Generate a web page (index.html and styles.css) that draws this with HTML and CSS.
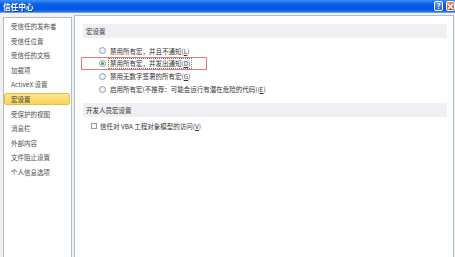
FILE: index.html
```html
<!DOCTYPE html>
<html>
  <head>
    <meta charset="UTF-8" />
    <title>信任中心</title>
    <link rel="stylesheet" href="styles.css">
  </head>
  <body>
    <div class="window">
      <div class="titlebar">
        <span class="title">信任中心</span>
        <span class="tb-btn help">?</span>
        <span class="tb-btn close">
          <svg width="7" height="7" viewBox="0 0 7 7"><path d="M1 1L6 6M6 1L1 6" stroke="#fff" stroke-width="1.6"/></svg>
        </span>
      </div>

      <div class="main">
        <ul class="nav">
          <li>受信任的发布者</li>
          <li>受信任位置</li>
          <li>受信任的文档</li>
          <li>加载项</li>
          <li>ActiveX 设置</li>
          <li class="active">宏设置</li>
          <li>受保护的视图</li>
          <li>消息栏</li>
          <li>外部内容</li>
          <li>文件阻止设置</li>
          <li>个人信息选项</li>
        </ul>

        <div class="content">
          <div class="band">宏设置</div>
          <div class="options">
            <div class="opt"><span class="radio"></span><span>禁用所有宏，并且不通知(<u>L</u>)</span></div>
            <div class="opt marked">
              <span class="radio checked"></span><span class="focus">禁用所有宏，并发出通知(<u>D</u>)</span>
              <span class="mark"></span>
            </div>
            <div class="opt"><span class="radio"></span><span>禁用无数字签署的所有宏(<u>G</u>)</span></div>
            <div class="opt"><span class="radio"></span><span>启用所有宏(不推荐：可能会运行有潜在危险的代码)(<u>E</u>)</span></div>
          </div>

          <div class="band second">开发人员宏设置</div>
          <div class="check-row"><span class="box"></span><span>信任对 VBA 工程对象模型的访问(<u>V</u>)</span></div>
        </div>
      </div>
    </div>
  </body>
</html>
```

FILE: styles.css
```css
* {
  margin: 0;
  padding: 0;
  box-sizing: border-box;
}

body {
  width: 455px;
  height: 257px;
  overflow: hidden;
  background-color: #f3f1e8;
  font-family: "Noto Sans CJK SC", "Noto Sans", sans-serif;
  font-size: 6.5px;
  color: #3c3c3c;
}

.window {
  height: 257px;
  display: flex;
  flex-direction: column;
}

.titlebar {
  height: 13px;
  flex-shrink: 0;
  display: flex;
  align-items: center;
  padding-left: 3px;
  background: linear-gradient(#3d8ef7, #0a5ee6 35%, #0055e4 75%, #2a74ee);
  border-bottom: 1px solid #6f9ee8;
}

.title {
  color: #fff;
  font-weight: bold;
  font-size: 7.6px;
  text-shadow: 1px 1px 0 #0a3aa8;
}

.tb-btn {
  width: 9px;
  height: 10px;
  display: flex;
  align-items: center;
  justify-content: center;
  border: 1px solid #fff;
  border-radius: 2px;
  color: #fff;
  font-weight: bold;
  font-size: 7px;
}

.help {
  margin-left: auto;
  background: linear-gradient(#5b9cf9, #2563e0);
}

.close {
  margin-left: 3px;
  background: linear-gradient(#f08a66, #d8431c);
}

.main {
  flex: 1;
  display: flex;
  align-items: stretch;
  gap: 2px;
  padding: 2px 1px 0 3px;
}

.nav {
  width: 69px;
  margin-top: 2px;
  list-style: none;
  background-color: #fff;
  border: 1px solid #a8bdd3;
  border-bottom: none;
  padding: 2px 1px 0 0;
}

.nav li {
  height: 12px;
  line-height: 12px;
  margin-bottom: 2.6px;
  padding-left: 7px;
  color: #4d4d4d;
  white-space: nowrap;
}

.nav li.active {
  background: linear-gradient(#fde68f, #f9d45a);
  border: 1px solid #e9bb43;
  border-radius: 2px;
  line-height: 10px;
  padding-left: 6px;
  color: #3a3a3a;
}

.content {
  flex: 1;
  background-color: #fff;
  border: 1px solid #a8bdd3;
  border-bottom: none;
  padding: 8px 6px 0 8px;
}

.band {
  height: 14px;
  line-height: 14px;
  padding-left: 3px;
  background-color: #eff0f4;
  color: #333;
}

.options {
  padding-top: 6.6px;
}

.opt {
  position: relative;
  height: 12.7px;
  display: flex;
  align-items: center;
  gap: 4px;
  padding-left: 16px;
  color: #333;
  white-space: nowrap;
}

.radio {
  width: 7px;
  height: 7px;
  border: 1px solid #8d9db2;
  border-radius: 50%;
  background: radial-gradient(#ffffff, #e4e8ee);
  display: flex;
  align-items: center;
  justify-content: center;
}

.radio.checked::after {
  content: "";
  width: 3px;
  height: 3px;
  border-radius: 50%;
  background-color: #2fb02f;
}

.focus {
  border: 1px dotted #7a7a7a;
  padding: 0 1px;
  margin-left: -2px;
  line-height: 9px;
}

.mark {
  position: absolute;
  left: -2px;
  top: 0;
  width: 126px;
  height: 13px;
  border: 1.5px solid #e77676;
}

.band.second {
  margin-top: 7.7px;
}

.check-row {
  height: 12px;
  margin-top: 3px;
  display: flex;
  align-items: center;
  gap: 3px;
  padding-left: 8px;
  color: #333;
}

.box {
  width: 6px;
  height: 6px;
  border: 1px solid #8d9db2;
  background: linear-gradient(#eef1f5, #fff);
}
```
